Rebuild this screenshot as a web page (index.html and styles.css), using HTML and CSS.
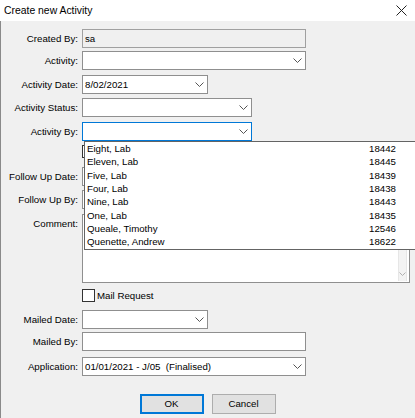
FILE: index.html
```html
<!DOCTYPE html>
<html>
<head>
<meta charset="utf-8">
<link rel="stylesheet" href="styles.css">
</head>
<body>
<div class="dialog">
  <div class="titlebar">
    <span class="title">Create new Activity</span>
    <svg class="close" width="11" height="11" viewBox="0 0 11 11"><path d="M0.5 0.5L10.5 10.5M10.5 0.5L0.5 10.5" stroke="#222" stroke-width="1"/></svg>
  </div>
  <div class="body">
    <div class="form">
      <div class="label">Created By:</div>
      <div class="field wide readonly"><span class="val">sa</span></div>

      <div class="label">Activity:</div>
      <div class="field wide combo"><span class="val"></span><svg class="chev" width="9" height="5" viewBox="0 0 9 5"><path d="M0.5 0.5L4.5 4.5L8.5 0.5" fill="none" stroke="#555" stroke-width="1"/></svg></div>

      <div class="label">Activity Date:</div>
      <div class="field date combo"><span class="val">8/02/2021</span><svg class="chev" width="9" height="5" viewBox="0 0 9 5"><path d="M0.5 0.5L4.5 4.5L8.5 0.5" fill="none" stroke="#555" stroke-width="1"/></svg></div>

      <div class="label">Activity Status:</div>
      <div class="field mid combo"><span class="val"></span><svg class="chev" width="9" height="5" viewBox="0 0 9 5"><path d="M0.5 0.5L4.5 4.5L8.5 0.5" fill="none" stroke="#555" stroke-width="1"/></svg></div>

      <div class="label">Activity By:</div>
      <div class="field mid combo focused"><span class="val"></span><svg class="chev" width="9" height="5" viewBox="0 0 9 5"><path d="M0.5 0.5L4.5 4.5L8.5 0.5" fill="none" stroke="#555" stroke-width="1"/></svg>
        <div class="droplist">
          <div class="item"><span>Eight, Lab</span><span>18442</span></div>
          <div class="item"><span>Eleven, Lab</span><span>18445</span></div>
          <div class="item"><span>Five, Lab</span><span>18439</span></div>
          <div class="item"><span>Four, Lab</span><span>18438</span></div>
          <div class="item"><span>Nine, Lab</span><span>18443</span></div>
          <div class="item"><span>One, Lab</span><span>18435</span></div>
          <div class="item"><span>Queale, Timothy</span><span>12546</span></div>
          <div class="item"><span>Quenette, Andrew</span><span>18622</span></div>
        </div>
      </div>

      <div class="label"></div>
      <div class="checkrow"><span class="box"></span></div>

      <div class="label">Follow Up Date:</div>
      <div class="field date combo"><span class="val"></span></div>

      <div class="label">Follow Up By:</div>
      <div class="field mid combo"><span class="val"></span></div>

      <div class="label">Comment:</div>
      <div class="textarea"><div class="scroll"><svg class="schev" width="7" height="4" viewBox="0 0 7 4"><path d="M0.5 0.5L3.5 3.5L6.5 0.5" fill="none" stroke="#b0b0b0" stroke-width="1"/></svg></div></div>

      <div class="label"></div>
      <div class="checkrow"><span class="box"></span><span class="cblabel">Mail Request</span></div>

      <div class="label">Mailed Date:</div>
      <div class="field date combo"><span class="val"></span><svg class="chev" width="9" height="5" viewBox="0 0 9 5"><path d="M0.5 0.5L4.5 4.5L8.5 0.5" fill="none" stroke="#555" stroke-width="1"/></svg></div>

      <div class="label">Mailed By:</div>
      <div class="field wide"><span class="val"></span></div>

      <div class="label">Application:</div>
      <div class="field wide combo"><span class="val">01/01/2021 - J/05&nbsp;&nbsp;(Finalised)</span><svg class="chev" width="9" height="5" viewBox="0 0 9 5"><path d="M0.5 0.5L4.5 4.5L8.5 0.5" fill="none" stroke="#555" stroke-width="1"/></svg></div>

      <div class="buttons">
        <div class="btn default">OK</div>
        <div class="btn">Cancel</div>
      </div>
    </div>
  </div>
</div>
</body>
</html>
```
FILE: styles.css
```css
html, body {
  margin: 0;
  padding: 0;
}
body {
  width: 415px;
  height: 418px;
  overflow: hidden;
  background: #f0f0f0;
  font-family: "Liberation Sans", Arial, sans-serif;
  font-size: 9.7px;
  color: #000;
}
.dialog {
  width: 415px;
  height: 418px;
  display: flex;
  flex-direction: column;
}
.titlebar {
  height: 21px;
  background: #fff;
  display: flex;
  align-items: center;
  justify-content: space-between;
  padding: 0 8px 0 4px;
  box-sizing: border-box;
  flex: none;
}
.title {
  font-size: 10.4px;
  color: #000;
}
.close {
  display: block;
  margin-top: -1px;
}
.body {
  flex: 1;
  border-left: 1px solid #8a8a8a;
  padding-top: 8px;
}
.form {
  display: grid;
  grid-template-columns: 77px 1fr;
  column-gap: 4px;
  grid-template-rows: 22px 24px 23px 24px 23px 22px 23px 24px 75px 21px 22px 25px 37px;
  align-items: start;
}
.label {
  height: 19px;
  line-height: 19px;
  text-align: right;
  white-space: nowrap;
}
.field {
  position: relative;
  height: 19px;
  box-sizing: border-box;
  border: 1px solid #8f8f8f;
  background: #fff;
  display: flex;
  align-items: center;
  padding-left: 2px;
}
.field.readonly {
  background: #f0f0f0;
  border-color: #a0a0a0;
}
.field.wide { width: 224px; }
.field.date { width: 126px; }
.field.mid { width: 170px; }
.field.focused { border-color: #0078d7; }
.val {
  flex: 1;
  white-space: nowrap;
}
.chev {
  display: block;
  margin-right: 3px;
}
.droplist {
  position: absolute;
  top: 18px;
  left: 1px;
  width: 340px;
  box-sizing: border-box;
  border: 1px solid #646464;
  background: #fff;
  padding: 0 27px 0 2px;
  z-index: 5;
}
.item {
  display: flex;
  justify-content: space-between;
  height: 13.35px;
  line-height: 13.35px;
}
.checkrow {
  display: flex;
  align-items: center;
  height: 13px;
  gap: 2px;
}
.box {
  display: block;
  width: 13px;
  height: 13px;
  box-sizing: border-box;
  border: 1px solid #333;
  background: #fff;
}
.textarea {
  width: 328px;
  height: 69px;
  box-sizing: border-box;
  border: 1px solid #8f8f8f;
  background: #fff;
  display: flex;
  justify-content: flex-end;
  padding: 1px 2px 1px 0;
}
.scroll {
  width: 9px;
  background: #f3f3f3;
  border-left: 1px solid #e6e6e6;
  border-right: 1px solid #e6e6e6;
  display: flex;
  align-items: flex-end;
  justify-content: center;
  padding-bottom: 5px;
  box-sizing: border-box;
}
.schev { display: block; }
.buttons {
  grid-column: 1 / 3;
  display: flex;
  justify-content: center;
  gap: 8px;
  padding-right: 1px;
}
.btn {
  width: 64px;
  height: 20px;
  box-sizing: border-box;
  border: 1px solid #adadad;
  background: #e1e1e1;
  text-align: center;
  line-height: 18px;
}
.btn.default {
  border: 2px solid #0078d7;
  line-height: 16px;
}
```
